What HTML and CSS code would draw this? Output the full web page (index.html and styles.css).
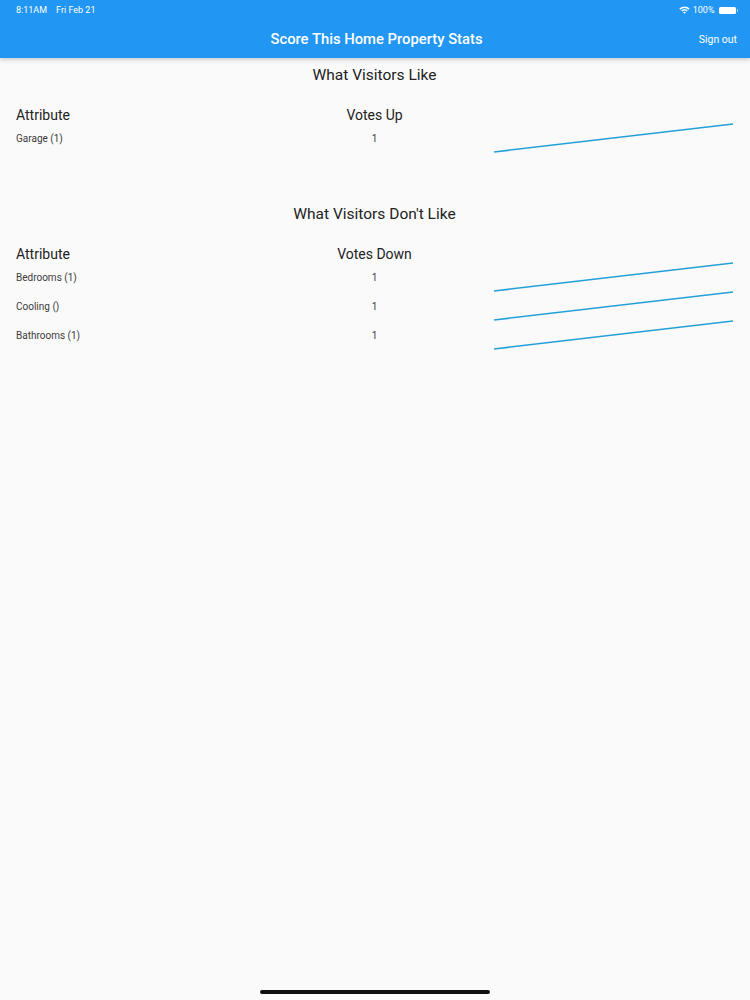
FILE: index.html
```html
<!DOCTYPE html>
<html>
<head>
<meta charset="utf-8">
<link rel="stylesheet" href="styles.css">
</head>
<body>
<header class="appbar">
  <div class="status">
    <div class="status-left"><span>8:11AM</span><span>Fri Feb 21</span></div>
    <div class="status-right">
      <svg class="wifi" width="11" height="8" viewBox="0 0 11 8">
        <path d="M0.3 2.6 A7.5 7.5 0 0 1 10.7 2.6 L9.6 3.7 A6 6 0 0 0 1.4 3.7 Z" fill="#fff"/>
        <path d="M2.2 4.5 A4.8 4.8 0 0 1 8.8 4.5 L7.7 5.6 A3.3 3.3 0 0 0 3.3 5.6 Z" fill="#fff"/>
        <path d="M4.1 6.4 A2 2 0 0 1 6.9 6.4 L5.5 7.8 Z" fill="#fff"/>
      </svg>
      <span class="pct">100%</span>
      <span class="battery"><span class="battery-body"></span><span class="battery-nub"></span></span>
    </div>
  </div>
  <div class="toolbar">
    <span class="spacer"></span>
    <h1 class="app-title">Score This Home Property Stats</h1>
    <span class="signout">Sign out</span>
  </div>
</header>

<main class="content">
  <section class="section">
    <h2 class="section-title">What Visitors Like</h2>
    <div class="table">
      <div class="row head">
        <div class="cell attr">Attribute</div>
        <div class="cell votes">Votes Up</div>
        <div class="cell chart"></div>
      </div>
      <div class="row">
        <div class="cell attr">Garage (1)</div>
        <div class="cell votes">1</div>
        <div class="cell chart"><svg viewBox="0 0 239 28" preserveAspectRatio="none"><line x1="0" y1="28" x2="239" y2="0"/></svg></div>
      </div>
    </div>
  </section>

  <section class="section second">
    <h2 class="section-title">What Visitors Don't Like</h2>
    <div class="table">
      <div class="row head">
        <div class="cell attr">Attribute</div>
        <div class="cell votes">Votes Down</div>
        <div class="cell chart"></div>
      </div>
      <div class="row">
        <div class="cell attr">Bedrooms (1)</div>
        <div class="cell votes">1</div>
        <div class="cell chart"><svg viewBox="0 0 239 28" preserveAspectRatio="none"><line x1="0" y1="28" x2="239" y2="0"/></svg></div>
      </div>
      <div class="row">
        <div class="cell attr">Cooling ()</div>
        <div class="cell votes">1</div>
        <div class="cell chart"><svg viewBox="0 0 239 28" preserveAspectRatio="none"><line x1="0" y1="28" x2="239" y2="0"/></svg></div>
      </div>
      <div class="row">
        <div class="cell attr">Bathrooms (1)</div>
        <div class="cell votes">1</div>
        <div class="cell chart"><svg viewBox="0 0 239 28" preserveAspectRatio="none"><line x1="0" y1="28" x2="239" y2="0"/></svg></div>
      </div>
    </div>
  </section>
</main>

<div class="home-indicator"></div>
</body>
</html>
```

FILE: styles.css
```css
html, body {
  margin: 0;
  padding: 0;
}
body {
  width: 750px;
  height: 1000px;
  background: #fafafa;
  font-family: Roboto, "Noto Sans", "Liberation Sans", sans-serif;
  color: #212121;
  position: relative;
  overflow: hidden;
}
.appbar {
  background: #2196f3;
  color: #fff;
  box-shadow: 0 2px 4px rgba(0,0,0,0.18);
  position: relative;
  z-index: 1;
}
.status {
  height: 20px;
  display: flex;
  justify-content: space-between;
  align-items: center;
  padding: 0 12px 0 16px;
  font-size: 9px;
}
.status-left {
  display: flex;
  gap: 9px;
}
.status-right {
  display: flex;
  align-items: center;
  gap: 2px;
}
.wifi {
  display: block;
  margin-right: 1px;
}
.pct {
  font-size: 9px;
}
.battery {
  display: flex;
  align-items: center;
  margin-left: 2px;
}
.battery-body {
  width: 17px;
  height: 7px;
  background: #fff;
  border-radius: 1.5px;
}
.battery-nub {
  width: 1.5px;
  height: 3px;
  background: rgba(255,255,255,0.6);
  margin-left: 1px;
  border-radius: 0 1px 1px 0;
}
.toolbar {
  height: 38px;
  display: flex;
  align-items: center;
  padding: 0 13px 0 16px;
}
.spacer {
  flex: 1;
}
.app-title {
  margin: 0;
  font-size: 14.8px;
  font-weight: 500;
  flex: 0 0 auto;
}
.signout {
  flex: 1;
  text-align: right;
  font-size: 10.5px;
}
.content {
  padding: 7px 17px 0 16px;
}
.section-title {
  margin: 0;
  height: 20px;
  line-height: 20px;
  text-align: center;
  font-size: 15.5px;
  font-weight: 400;
  color: #222;
}
.second {
  margin-top: 51px;
}
.table {
  margin-top: 20px;
}
.row {
  display: grid;
  grid-template-columns: 1fr 1fr 1fr;
  height: 29px;
  align-items: center;
}
.row.head {
  height: 19px;
}
.head .cell {
  font-size: 14px;
  color: #222;
}
.cell {
  font-size: 10px;
  color: #3a3a3a;
}
.votes {
  text-align: center;
}
.chart {
  height: 28px;
  align-self: start;
}
.head .chart {
  height: 19px;
}
.chart svg {
  display: block;
  width: 100%;
  height: 100%;
  overflow: visible;
}
.chart line {
  stroke: #23a0d8;
  stroke-width: 1.5;
  vector-effect: non-scaling-stroke;
}
.home-indicator {
  position: absolute;
  left: 260px;
  top: 990px;
  width: 230px;
  height: 4px;
  border-radius: 2px;
  background: #111;
}
```
